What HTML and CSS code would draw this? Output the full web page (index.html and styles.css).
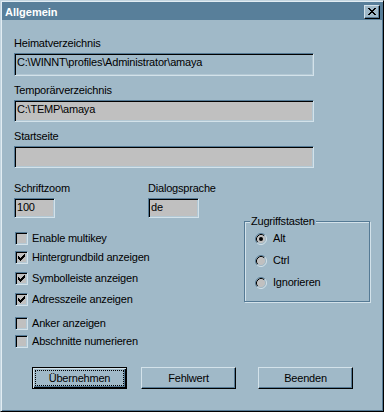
FILE: index.html
```html
<!DOCTYPE html>
<html lang="de">
<head>
<meta charset="utf-8">
<title>Allgemein</title>
<link rel="stylesheet" href="styles.css">
</head>
<body>
<div class="window">
  <div class="titlebar">
    <span class="title">Allgemein</span>
    <span class="close"><svg width="14" height="12" viewBox="0 0 14 12" shape-rendering="crispEdges"><path fill="#000" d="M3 2h2v1h-2zM9 2h2v1h-2zM4 3h2v1h-2zM8 3h2v1h-2zM5 4h4v1h-4zM6 5h2v1h-2zM5 6h4v1h-4zM4 7h2v1h-2zM8 7h2v1h-2zM3 8h2v1h-2zM9 8h2v1h-2z"/></svg></span>
  </div>
  <div class="content">
    <div class="paths">
      <div class="group">
        <div class="label">Heimatverzeichnis</div>
        <div class="field field-wide field-tall field-plain">C:\WINNT\profiles\Administrator\amaya</div>
      </div>
      <div class="group">
        <div class="label">Temporärverzeichnis</div>
        <div class="field field-wide">C:\TEMP\amaya</div>
      </div>
      <div class="group">
        <div class="label">Startseite</div>
        <div class="field field-wide"></div>
      </div>
    </div>
    <div class="row2">
      <div class="group col-zoom">
        <div class="label">Schriftzoom</div>
        <div class="field field-small">100</div>
      </div>
      <div class="group">
        <div class="label">Dialogsprache</div>
        <div class="field field-lang">de</div>
      </div>
    </div>
    <div class="lower">
      <div class="checks">
        <div class="check"><span class="box"></span><span>Enable multikey</span></div>
        <div class="check g6"><span class="box"><svg width="11" height="11" viewBox="1 1 11 11" shape-rendering="crispEdges"><path fill="#000" d="M9 3h1v1h-1zM8 4h2v1h-2zM3 5h1v1h-1zM7 5h3v1h-3zM3 6h2v1h-2zM6 6h3v1h-3zM3 7h5v1h-5zM4 8h3v1h-3zM5 9h1v1h-1z"/></svg></span><span>Hintergrundbild anzeigen</span></div>
        <div class="check g8"><span class="box"><svg width="11" height="11" viewBox="1 1 11 11" shape-rendering="crispEdges"><path fill="#000" d="M9 3h1v1h-1zM8 4h2v1h-2zM3 5h1v1h-1zM7 5h3v1h-3zM3 6h2v1h-2zM6 6h3v1h-3zM3 7h5v1h-5zM4 8h3v1h-3zM5 9h1v1h-1z"/></svg></span><span>Symbolleiste anzeigen</span></div>
        <div class="check g8"><span class="box"><svg width="11" height="11" viewBox="1 1 11 11" shape-rendering="crispEdges"><path fill="#000" d="M9 3h1v1h-1zM8 4h2v1h-2zM3 5h1v1h-1zM7 5h3v1h-3zM3 6h2v1h-2zM6 6h3v1h-3zM3 7h5v1h-5zM4 8h3v1h-3zM5 9h1v1h-1z"/></svg></span><span>Adresszeile anzeigen</span></div>
        <div class="check g11"><span class="box"></span><span>Anker anzeigen</span></div>
        <div class="check g5"><span class="box"></span><span>Abschnitte numerieren</span></div>
      </div>
      <fieldset class="groupbox">
        <legend>Zugriffstasten</legend>
        <div class="radios">
          <div class="radio-row"><svg class="radio" width="12" height="12" viewBox="0 0 12 12"><circle cx="6" cy="6" r="5" fill="#c0c0c0"/><path d="M2.11 9.89A5.5 5.5 0 0 1 9.89 2.11" fill="none" stroke="#557a95"/><path d="M9.89 2.11A5.5 5.5 0 0 1 2.11 9.89" fill="none" stroke="#d3e2ea"/><path d="M2.82 9.18A4.5 4.5 0 0 1 9.18 2.82" fill="none" stroke="#000"/><path d="M9.18 2.82A4.5 4.5 0 0 1 2.82 9.18" fill="none" stroke="#a0b9c8"/><circle cx="6" cy="6" r="2" fill="#000"/></svg><span>Alt</span></div>
          <div class="radio-row"><svg class="radio" width="12" height="12" viewBox="0 0 12 12"><circle cx="6" cy="6" r="5" fill="#c0c0c0"/><path d="M2.11 9.89A5.5 5.5 0 0 1 9.89 2.11" fill="none" stroke="#557a95"/><path d="M9.89 2.11A5.5 5.5 0 0 1 2.11 9.89" fill="none" stroke="#d3e2ea"/><path d="M2.82 9.18A4.5 4.5 0 0 1 9.18 2.82" fill="none" stroke="#000"/><path d="M9.18 2.82A4.5 4.5 0 0 1 2.82 9.18" fill="none" stroke="#a0b9c8"/></svg><span>Ctrl</span></div>
          <div class="radio-row"><svg class="radio" width="12" height="12" viewBox="0 0 12 12"><circle cx="6" cy="6" r="5" fill="#c0c0c0"/><path d="M2.11 9.89A5.5 5.5 0 0 1 9.89 2.11" fill="none" stroke="#557a95"/><path d="M9.89 2.11A5.5 5.5 0 0 1 2.11 9.89" fill="none" stroke="#d3e2ea"/><path d="M2.82 9.18A4.5 4.5 0 0 1 9.18 2.82" fill="none" stroke="#000"/><path d="M9.18 2.82A4.5 4.5 0 0 1 2.82 9.18" fill="none" stroke="#a0b9c8"/></svg><span>Ignorieren</span></div>
        </div>
      </fieldset>
    </div>
    <div class="buttons">
      <div class="btn btn-default">Übernehmen</div>
      <div class="btn btn-2">Fehlwert</div>
      <div class="btn btn-3">Beenden</div>
    </div>
  </div>
</div>
</body>
</html>
```

FILE: styles.css
```css
body {
  margin: 0;
  font-family: "Liberation Sans", Arial, sans-serif;
  font-size: 11px;
  letter-spacing: -0.2px;
  color: #000;
}

.window {
  width: 384px;
  height: 412px;
  box-sizing: border-box;
  background: #a0b9c8;
  border: 1px solid;
  border-color: #c3d5e0 #000 #000 #c3d5e0;
  box-shadow: inset 1px 1px 0 #e2edf3, inset -1px -1px 0 #557a95;
  padding: 1px;
}

.titlebar {
  display: flex;
  justify-content: space-between;
  align-items: flex-start;
  height: 18px;
  background: #587f9a;
  padding: 0 2px 0 3px;
}

.title {
  color: #fff;
  font-weight: bold;
  letter-spacing: 0;
  line-height: 16px;
  margin-top: 2px;
}

.close {
  display: flex;
  width: 16px;
  height: 14px;
  box-sizing: border-box;
  margin-top: 3px;
  background: #a0b9c8;
  border: 1px solid;
  border-color: #d3e2ea #000 #000 #d3e2ea;
  box-shadow: inset -1px -1px 0 #557a95;
}

.content {
  padding: 17px 0 0 12px;
}

.paths {
  display: flex;
  flex-direction: column;
  gap: 8px;
}

.label {
  height: 13px;
  line-height: 13px;
  white-space: nowrap;
}

.field {
  margin-top: 3px;
  box-sizing: border-box;
  height: 22px;
  border: 1px solid;
  border-color: #557a95 #d3e2ea #d3e2ea #557a95;
  box-shadow: inset 1px 1px 0 #000, inset -1px -1px 0 #b3c8d4;
  background: #c0c0c0;
  padding: 2px 0 0 2px;
  line-height: 13px;
  white-space: nowrap;
  overflow: hidden;
}

.field-wide { width: 300px; }
.field-tall { height: 23px; }
.field-plain { background: #a0b9c8; }

.row2 {
  display: flex;
  margin-top: 14px;
}

.col-zoom { width: 134px; }

.field-small { width: 41px; height: 20px; }
.field-lang { width: 51px; height: 20px; }

.lower {
  display: flex;
  align-items: flex-start;
}

.checks {
  width: 230px;
  flex: none;
  padding-top: 14px;
}

.check {
  display: flex;
  align-items: center;
  height: 13px;
  line-height: 13px;
  gap: 4px;
  margin-left: 1px;
  white-space: nowrap;
}

.g5 { margin-top: 5px; }
.g6 { margin-top: 6px; }
.g8 { margin-top: 8px; }
.g11 { margin-top: 11px; }

.box {
  display: flex;
  width: 13px;
  height: 13px;
  box-sizing: border-box;
  flex: none;
  border: 1px solid;
  border-color: #557a95 #d3e2ea #d3e2ea #557a95;
  box-shadow: inset 1px 1px 0 #000, inset -1px -1px 0 #b3c8d4;
  background: #c0c0c0;
}

.groupbox {
  margin: 0;
  width: 126px;
  height: 84px;
  box-sizing: border-box;
  min-width: 0;
  padding: 7px 0 0 5px;
  border: 1px solid #557a95;
  box-shadow: inset 1px 1px 0 #d3e2ea, 1px 1px 0 #d3e2ea;
}

.groupbox legend {
  padding: 0 1px;
  line-height: 7px;
  background: #a0b9c8;
  white-space: nowrap;
}

.radios {
  display: flex;
  flex-direction: column;
  gap: 9px;
  padding-left: 5px;
}

.radio-row {
  display: flex;
  align-items: center;
  height: 13px;
  line-height: 13px;
  gap: 6px;
}

.radio { flex: none; }

.buttons {
  display: flex;
  margin-top: 19px;
  padding-left: 18px;
}

.btn {
  display: flex;
  align-items: center;
  justify-content: center;
  width: 95px;
  height: 22px;
  box-sizing: border-box;
  border: 1px solid;
  border-color: #d3e2ea #000 #000 #d3e2ea;
  box-shadow: inset -1px -1px 0 #557a95;
  line-height: 13px;
}

.btn-default {
  border: 1px solid #000;
  box-shadow: inset 1px 1px 0 #d3e2ea, inset -1px -1px 0 #000, inset -2px -2px 0 #557a95;
  outline: 1px dotted #000;
  outline-offset: -4px;
}

.btn-2 { margin-left: 14px; }
.btn-3 { margin-left: 22px; }
```
